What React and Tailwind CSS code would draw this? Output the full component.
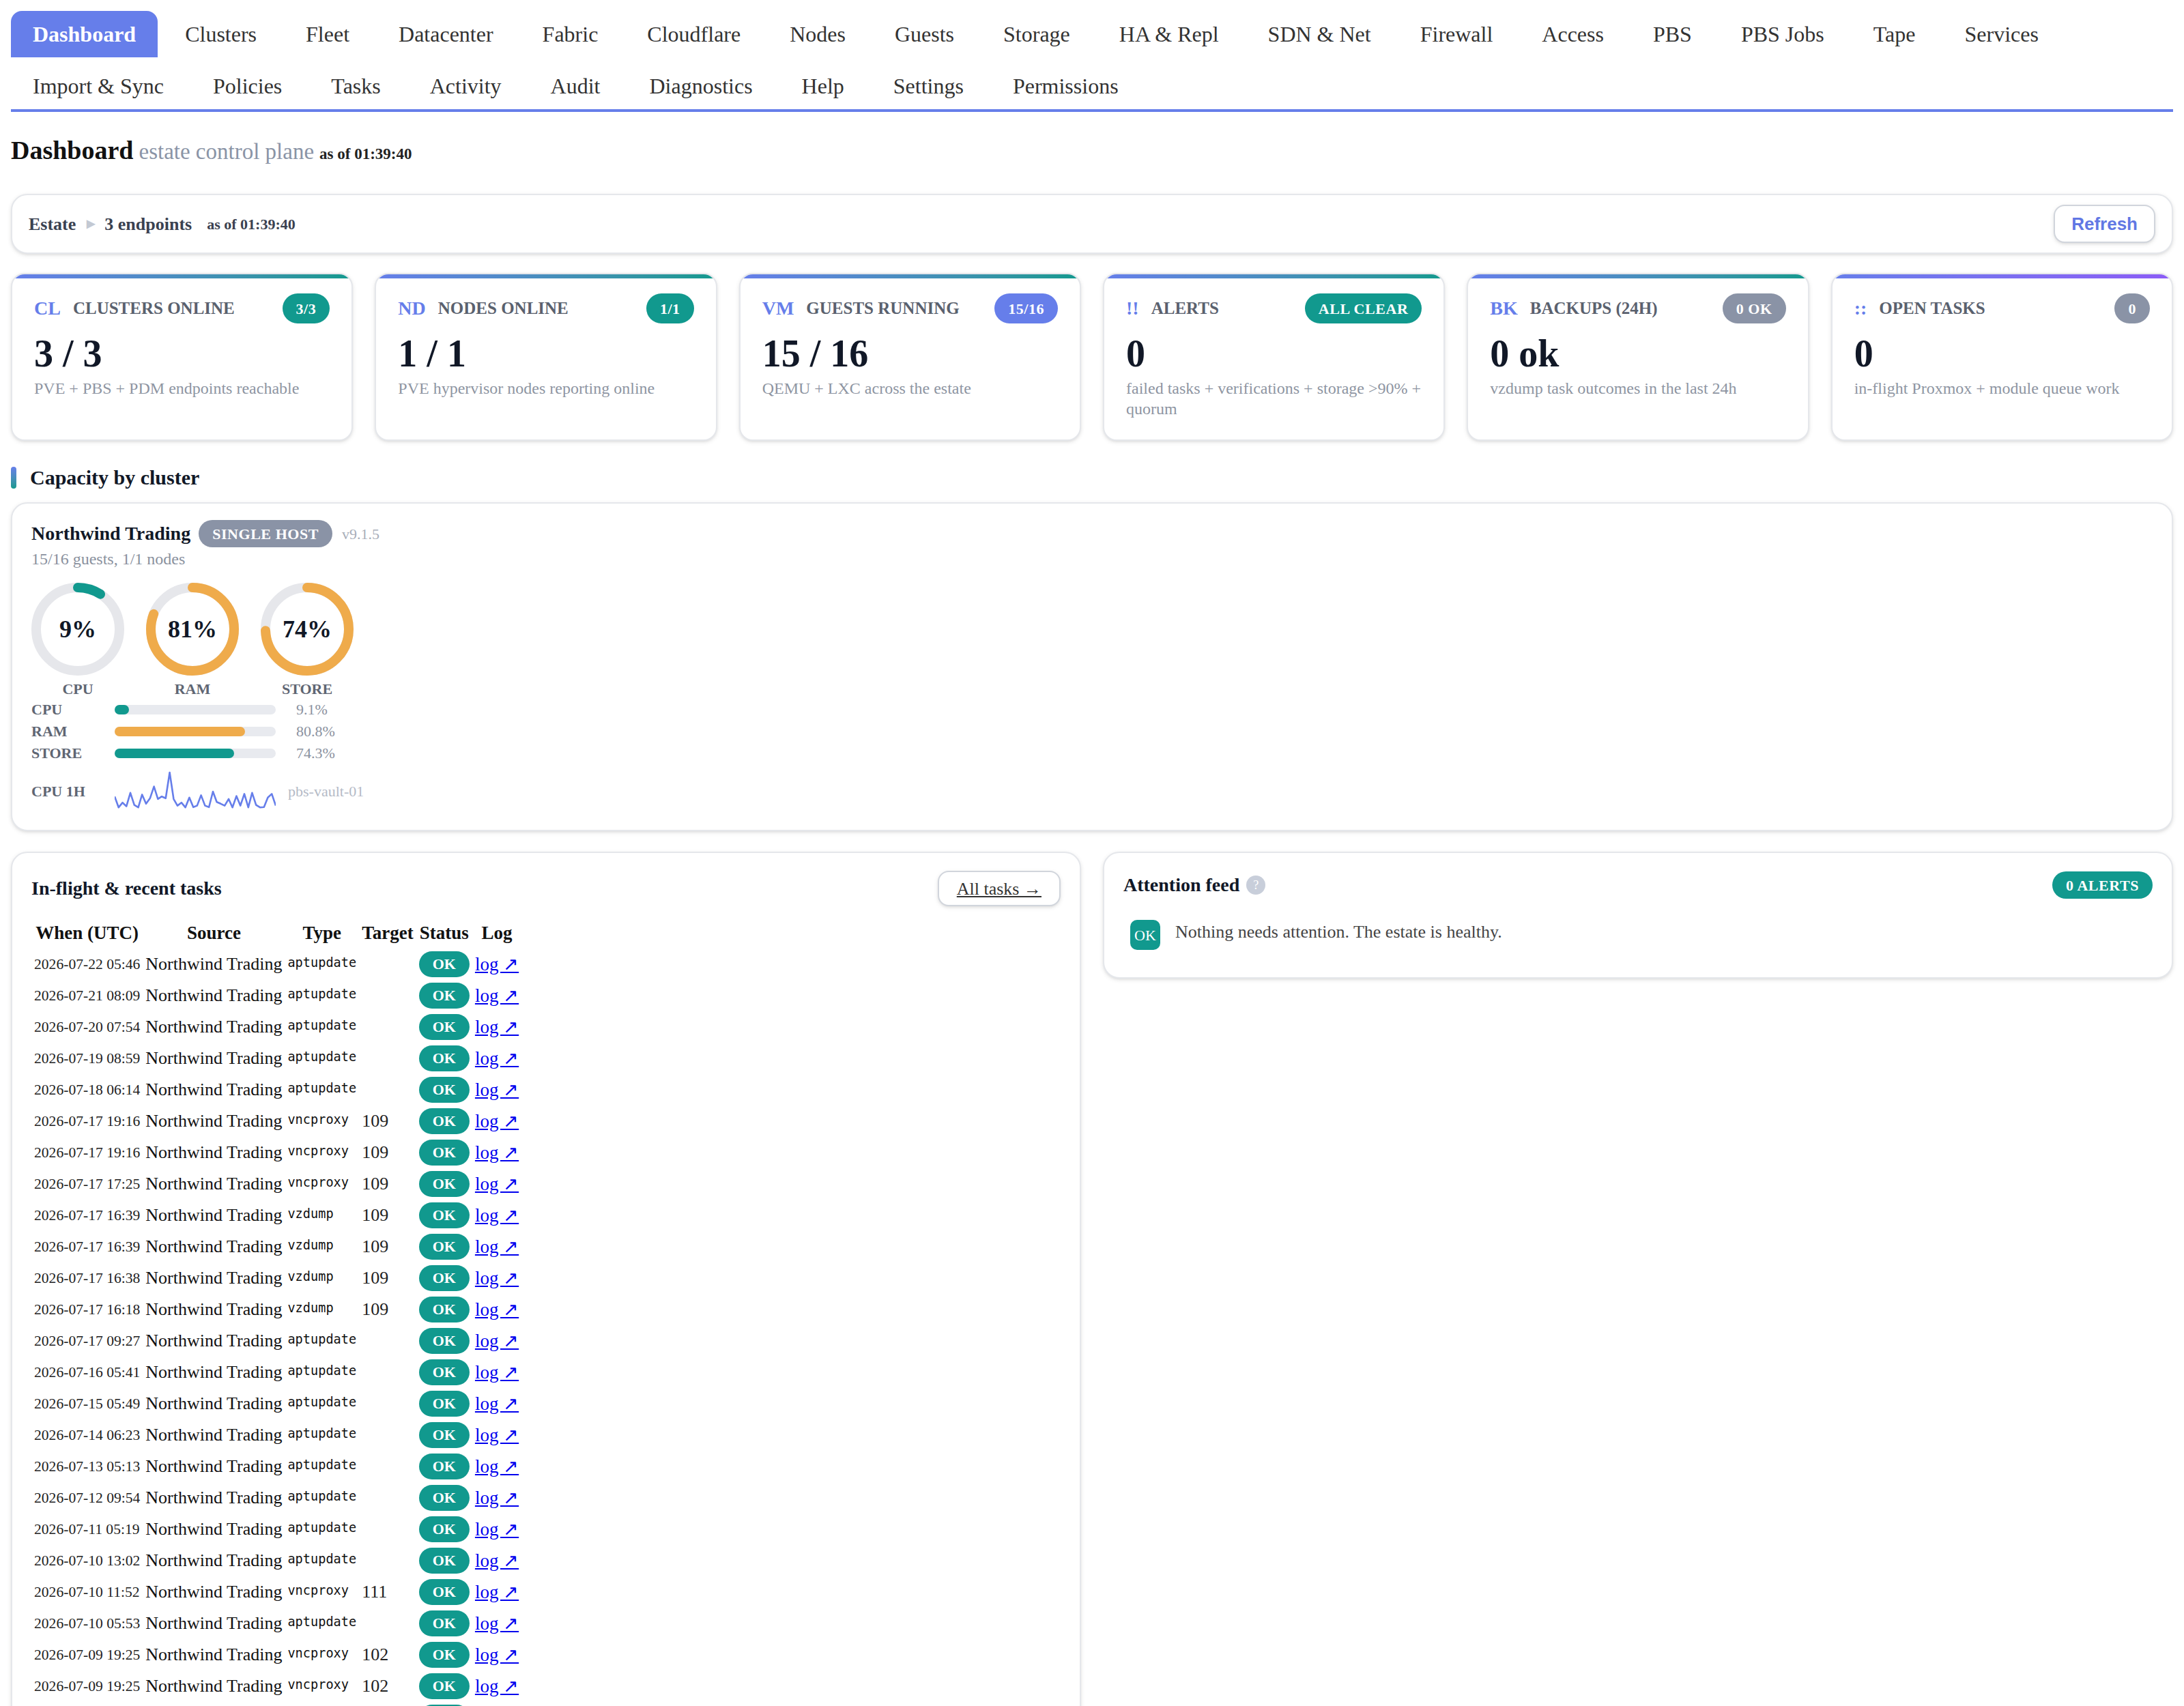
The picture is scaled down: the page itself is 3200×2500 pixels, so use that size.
import React from "react";

const TEAL = "#11998e";
const ORANGE = "#efab4b";
const BLUE = "#667eea";

const tabs1 = ["Dashboard","Clusters","Fleet","Datacenter","Fabric","Cloudflare","Nodes","Guests","Storage","HA & Repl","SDN & Net","Firewall","Access","PBS","PBS Jobs","Tape","Services"];
const tabs2 = ["Import & Sync","Policies","Tasks","Activity","Audit","Diagnostics","Help","Settings","Permissions"];

const rows = [
  ["2026-07-22 05:46","aptupdate",""],
  ["2026-07-21 08:09","aptupdate",""],
  ["2026-07-20 07:54","aptupdate",""],
  ["2026-07-19 08:59","aptupdate",""],
  ["2026-07-18 06:14","aptupdate",""],
  ["2026-07-17 19:16","vncproxy","109"],
  ["2026-07-17 19:16","vncproxy","109"],
  ["2026-07-17 17:25","vncproxy","109"],
  ["2026-07-17 16:39","vzdump","109"],
  ["2026-07-17 16:39","vzdump","109"],
  ["2026-07-17 16:38","vzdump","109"],
  ["2026-07-17 16:18","vzdump","109"],
  ["2026-07-17 09:27","aptupdate",""],
  ["2026-07-16 05:41","aptupdate",""],
  ["2026-07-15 05:49","aptupdate",""],
  ["2026-07-14 06:23","aptupdate",""],
  ["2026-07-13 05:13","aptupdate",""],
  ["2026-07-12 09:54","aptupdate",""],
  ["2026-07-11 05:19","aptupdate",""],
  ["2026-07-10 13:02","aptupdate",""],
  ["2026-07-10 11:52","vncproxy","111"],
  ["2026-07-10 05:53","aptupdate",""],
  ["2026-07-09 19:25","vncproxy","102"],
  ["2026-07-09 19:25","vncproxy","102"],
  ["2026-07-09 11:31","vncproxy","101"],
  ["2026-07-09 06:02","aptupdate",""],
  ["2026-07-08 05:37","aptupdate",""],
];

const spark = [0.35,0.05,0.18,0.08,0.45,0.12,0.05,0.4,0.15,0.3,0.62,0.28,0.35,0.3,1.0,0.28,0.1,0.18,0.05,0.32,0.06,0.1,0.38,0.1,0.06,0.48,0.2,0.15,0.1,0.28,0.05,0.36,0.1,0.42,0.05,0.45,0.12,0.05,0.06,0.32,0.42,0.1];

function Donut({ pct, color, label }) {
  const r = 30.5;
  const c = 2 * Math.PI * r;
  return (
    <div className="flex w-[68px] flex-col items-center">
      <div className="relative h-[68px] w-[68px]">
        <svg width="68" height="68" viewBox="0 0 68 68">
          <circle cx="34" cy="34" r={r} fill="none" stroke="#e6e7eb" strokeWidth="7" />
          <circle cx="34" cy="34" r={r} fill="none" stroke={color} strokeWidth="7" strokeLinecap="round" strokeDasharray={`${(c * pct) / 100} ${c}`} transform="rotate(-90 34 34)" />
        </svg>
        <div className="absolute inset-0 flex items-center justify-center text-[18px] font-bold text-[#111827]">{Math.round(pct)}%</div>
      </div>
      <div className="mt-[3px] text-[11px] font-bold uppercase leading-[14px] text-[#5f6673]">{label}</div>
    </div>
  );
}

function Bar({ label, pct, color }) {
  return (
    <div className="flex h-4 items-center">
      <div className="w-[61px] text-[11px] font-bold leading-[14px] text-[#5f6673]">{label}</div>
      <div className="h-[7px] w-[118px] rounded-full bg-[#e8eaef]">
        <div className="h-[7px] rounded-full" style={{ width: `${pct}%`, backgroundColor: color }} />
      </div>
      <div className="ml-[15px] text-[11px] leading-[14px] text-[#8b92a0]">{pct}%</div>
    </div>
  );
}

function StatCard({ code, title, badge, badgeClass, value, desc, grad }) {
  return (
    <div className="overflow-hidden rounded-[10px] border border-gray-200 bg-white shadow-sm">
      <div className={`h-[3px] ${grad}`} />
      <div className="px-4 pb-[15px] pt-[11px]">
        <div className="flex h-[22px] items-center justify-between">
          <div className="flex items-center gap-[9px]">
            <span className="text-[14px] font-bold text-[#667eea]">{code}</span>
            <span className="text-[12.5px] font-bold uppercase text-[#5a616e]">{title}</span>
          </div>
          <span className={`flex h-[22px] items-center rounded-full px-2.5 text-[11px] font-bold tracking-wide text-white ${badgeClass}`}>{badge}</span>
        </div>
        <div className="mt-[5px] text-[28px] font-bold leading-[34px] text-[#111827]">{value}</div>
        <div className="mt-[1px] text-[12px] leading-[15px] text-[#8e95a2]">{desc}</div>
      </div>
    </div>
  );
}

export default function App() {
  const pts = spark.map((v, i) => `${((i * 118) / (spark.length - 1)).toFixed(1)},${(29 - v * 27).toFixed(1)}`).join(" ");
  return (
    <div className="[zoom:2] bg-white font-['Liberation_Serif',serif] text-[#222]">
      <div className="p-2">
        {/* Nav */}
        <div className="border-b-2 border-[#667eea]">
          <div className="flex gap-1">
            {tabs1.map((t, i) => (
              <div key={t} className={i === 0 ? "flex h-[34px] items-center rounded-t-lg bg-[#667eea] px-4 text-[16px] font-bold text-white" : "flex h-[34px] items-center px-4 text-[16px] text-[#333]"}>{t}</div>
            ))}
          </div>
          <div className="mt-1 flex gap-1">
            {tabs2.map((t) => (
              <div key={t} className="flex h-[34px] items-center px-4 text-[16px] text-[#333]">{t}</div>
            ))}
          </div>
        </div>

        {/* Header */}
        <div className="mt-4 flex items-baseline gap-[4px] leading-[24px]">
          <span className="text-[19px] font-bold text-[#111]">Dashboard</span>
          <span className="text-[16.5px] text-[#8a94a6]">estate control plane</span>
          <span className="text-[11.5px] font-bold text-[#222]">as of 01:39:40</span>
        </div>

        {/* Estate bar */}
        <div className="mt-[17px] flex h-[44px] items-center justify-between rounded-xl border border-gray-200 bg-white px-3 shadow-sm">
          <div className="flex items-center text-[13px] font-bold text-[#3a4150]">
            <span>Estate</span>
            <span className="ml-[8px] text-[8px] text-[#c3c9d3]">▶</span>
            <span className="ml-[7px]">3 endpoints</span>
            <span className="ml-[11px] text-[11px]">as of 01:39:40</span>
          </div>
          <button className="h-[28px] rounded-lg border border-gray-300 bg-white px-3 font-['Liberation_Sans',sans-serif] text-[13px] font-bold text-[#6177e4] shadow-sm">Refresh</button>
        </div>

        {/* Stat cards */}
        <div className="mt-[14px] grid grid-cols-6 gap-4">
          <StatCard code="CL" title="Clusters online" badge="3/3" badgeClass="bg-[#11998e]" value="3 / 3" desc="PVE + PBS + PDM endpoints reachable" grad="bg-linear-to-r from-[#667eea] to-[#11998e]" />
          <StatCard code="ND" title="Nodes online" badge="1/1" badgeClass="bg-[#11998e]" value="1 / 1" desc="PVE hypervisor nodes reporting online" grad="bg-linear-to-r from-[#667eea] to-[#11998e]" />
          <StatCard code="VM" title="Guests running" badge="15/16" badgeClass="bg-[#667eea]" value="15 / 16" desc="QEMU + LXC across the estate" grad="bg-linear-to-r from-[#667eea] to-[#11998e]" />
          <StatCard code="!!" title="Alerts" badge="ALL CLEAR" badgeClass="bg-[#11998e]" value="0" desc="failed tasks + verifications + storage >90% + quorum" grad="bg-linear-to-r from-[#667eea] to-[#11998e]" />
          <StatCard code="BK" title="Backups (24h)" badge="0 OK" badgeClass="bg-[#8a93a6]" value="0 ok" desc="vzdump task outcomes in the last 24h" grad="bg-linear-to-r from-[#667eea] to-[#11998e]" />
          <StatCard code="::" title="Open tasks" badge="0" badgeClass="bg-[#8a93a6]" value="0" desc="in-flight Proxmox + module queue work" grad="bg-linear-to-r from-[#667eea] to-[#8b5cf6]" />
        </div>

        {/* Capacity */}
        <div className="mt-[17px] flex items-center gap-[10px]">
          <div className="h-[16px] w-[4px] rounded-full bg-linear-to-b from-[#667eea] to-[#11998e]" />
          <div className="text-[15px] font-bold leading-[20px] text-[#111827]">Capacity by cluster</div>
        </div>

        <div className="mt-2 rounded-xl border border-gray-200 bg-white px-[14px] pb-[13px] pt-3 shadow-sm">
          <div className="flex h-[20px] items-center">
            <span className="text-[14px] font-bold text-[#111827]">Northwind Trading</span>
            <span className="ml-[6px] flex h-[20px] items-center rounded-full bg-[#8a93a6] px-[10px] text-[11px] font-bold tracking-wide text-white">SINGLE HOST</span>
            <span className="ml-[7px] text-[11px] text-[#a8aeb9]">v9.1.5</span>
          </div>
          <div className="text-[12px] leading-[17px] text-[#8a919e]">15/16 guests, 1/1 nodes</div>
          <div className="mt-[9px] flex gap-4">
            <Donut pct={9.1} color={TEAL} label="CPU" />
            <Donut pct={80.8} color={ORANGE} label="RAM" />
            <Donut pct={74.3} color={ORANGE} label="STORE" />
          </div>
          <div>
            <Bar label="CPU" pct={9.1} color={TEAL} />
            <Bar label="RAM" pct={80.8} color={ORANGE} />
            <Bar label="STORE" pct={74.3} color={TEAL} />
          </div>
          <div className="mt-[4px] flex items-center">
            <div className="w-[61px] text-[11px] font-bold text-[#5f6673]">CPU 1H</div>
            <svg width="118" height="31" viewBox="0 0 118 31">
              <polyline points={pts} fill="none" stroke={BLUE} strokeWidth="1.3" strokeLinejoin="round" />
            </svg>
            <div className="ml-[9px] text-[11px] text-[#b4bac6]">pbs-vault-01</div>
          </div>
        </div>

        {/* Bottom panels */}
        <div className="mt-[15px] grid grid-cols-2 items-start gap-4">
          <div className="rounded-xl border border-gray-200 bg-white px-[14px] pb-4 pt-[13px] shadow-sm">
            <div className="flex items-center justify-between">
              <div className="text-[14px] font-bold text-[#111827]">In-flight &amp; recent tasks</div>
              <button className="h-[26px] rounded-lg border border-gray-300 bg-white px-[13px] text-[13px] text-[#333] underline shadow-sm">All tasks →</button>
            </div>
            <table className="mt-2 border-collapse text-[13px] leading-[17px]">
              <thead>
                <tr>
                  {["When (UTC)", "Source", "Type", "Target", "Status", "Log"].map((h) => (
                    <th key={h} className="px-[2px] py-[2px] text-center text-[13.5px] font-bold leading-[19px] text-[#111]">{h}</th>
                  ))}
                </tr>
              </thead>
              <tbody>
                {rows.map((r, i) => (
                  <tr key={i}>
                    <td className="h-[23px] px-[2px] py-0 align-middle text-[10.8px] leading-[17px] text-[#222]">{r[0]}</td>
                    <td className="h-[23px] px-[2px] py-0 align-middle text-[13px] leading-[17px] text-[#111]">Northwind Trading</td>
                    <td className="h-[23px] px-[2px] py-0 align-middle leading-[17px]"><code className="relative -top-[2px] font-['DejaVu_Sans_Mono',monospace] text-[9.3px] leading-none text-[#111]">{r[1]}</code></td>
                    <td className="h-[23px] px-[2px] py-0 align-middle text-[13px] leading-[17px] text-[#222]">{r[2]}</td>
                    <td className="h-[23px] px-[2px] py-0 align-middle leading-none"><span className="inline-block h-[19px] rounded-full bg-[#11998e] px-[10px] align-middle text-[11px] font-bold leading-[19px] text-white">OK</span></td>
                    <td className="h-[23px] px-[2px] py-0 align-middle leading-[17px]"><a className="text-[13.5px] text-[#0000ee] underline">log ↗</a></td>
                  </tr>
                ))}
              </tbody>
            </table>
          </div>

          <div className="rounded-xl border border-gray-200 bg-white px-[14px] pb-5 pt-[13px] shadow-sm">
            <div className="flex items-center justify-between">
              <div className="flex items-center">
                <span className="text-[14px] font-bold text-[#111827]">Attention feed</span>
                <span className="ml-[5px] flex h-[14px] w-[14px] items-center justify-center rounded-full bg-[#c8ceda] text-[9px] text-white">?</span>
              </div>
              <span className="flex h-[20px] items-center rounded-full bg-[#11998e] px-2.5 text-[11px] font-bold tracking-wide text-white">0 ALERTS</span>
            </div>
            <div className="mt-[15px] flex items-start gap-[11px] pl-[5px]">
              <span className="flex h-[22px] w-[22px] items-center justify-center rounded-[5px] bg-[#11998e] text-[11px] text-white">OK</span>
              <span className="text-[13px] leading-[18px] text-[#444]">Nothing needs attention. The estate is healthy.</span>
            </div>
          </div>
        </div>
      </div>
    </div>
  );
}
